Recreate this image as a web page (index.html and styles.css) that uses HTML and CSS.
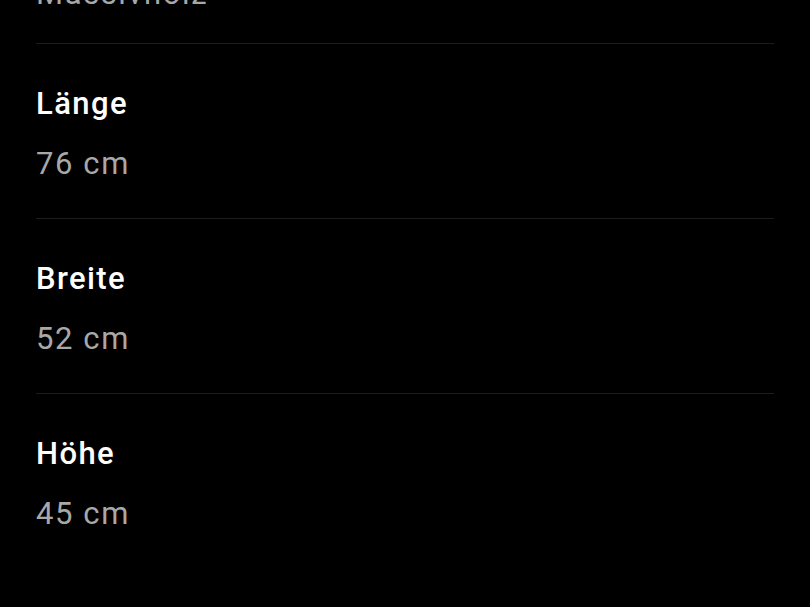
FILE: index.html
```html
<!DOCTYPE html>
<html lang="de">
<head>
    <meta charset="UTF-8">
    <meta name="viewport" content="width=device-width, initial-scale=1.0">
    <title>Maße</title>
    <link rel="stylesheet" href="styles.css">
</head>
<body>
    <div class="details">
        <div class="row">
            <div class="label">Material</div>
            <div class="value">Massivholz</div>
        </div>
        <div class="row">
            <div class="label">Länge</div>
            <div class="value">76 cm</div>
        </div>
        <div class="row">
            <div class="label">Breite</div>
            <div class="value">52 cm</div>
        </div>
        <div class="row">
            <div class="label">Höhe</div>
            <div class="value">45 cm</div>
        </div>
    </div>
</body>
</html>
```

FILE: styles.css
```css
body {
    margin: 0;
    padding: 0;
    background: #000;
    color: #fff;
    font-family: 'Roboto', 'Open Sans', sans-serif;
    height: 607px;
    overflow: hidden;
}

.details {
    margin: -126px 36px 0 36px;
}

.row {
    display: flex;
    flex-direction: column;
    gap: 20px;
    padding: 40px 0 34px 0;
    border-top: 1px solid #1c1c1c;
}

.row:first-child {
    border-top: none;
    padding-bottom: 29px;
}

.label {
    font-size: 31px;
    font-weight: 500;
    letter-spacing: 1.4px;
    line-height: 40px;
    color: #fff;
}

.value {
    font-size: 31px;
    font-weight: 400;
    letter-spacing: 1.6px;
    line-height: 40px;
    color: #a8a8a8;
}
```
